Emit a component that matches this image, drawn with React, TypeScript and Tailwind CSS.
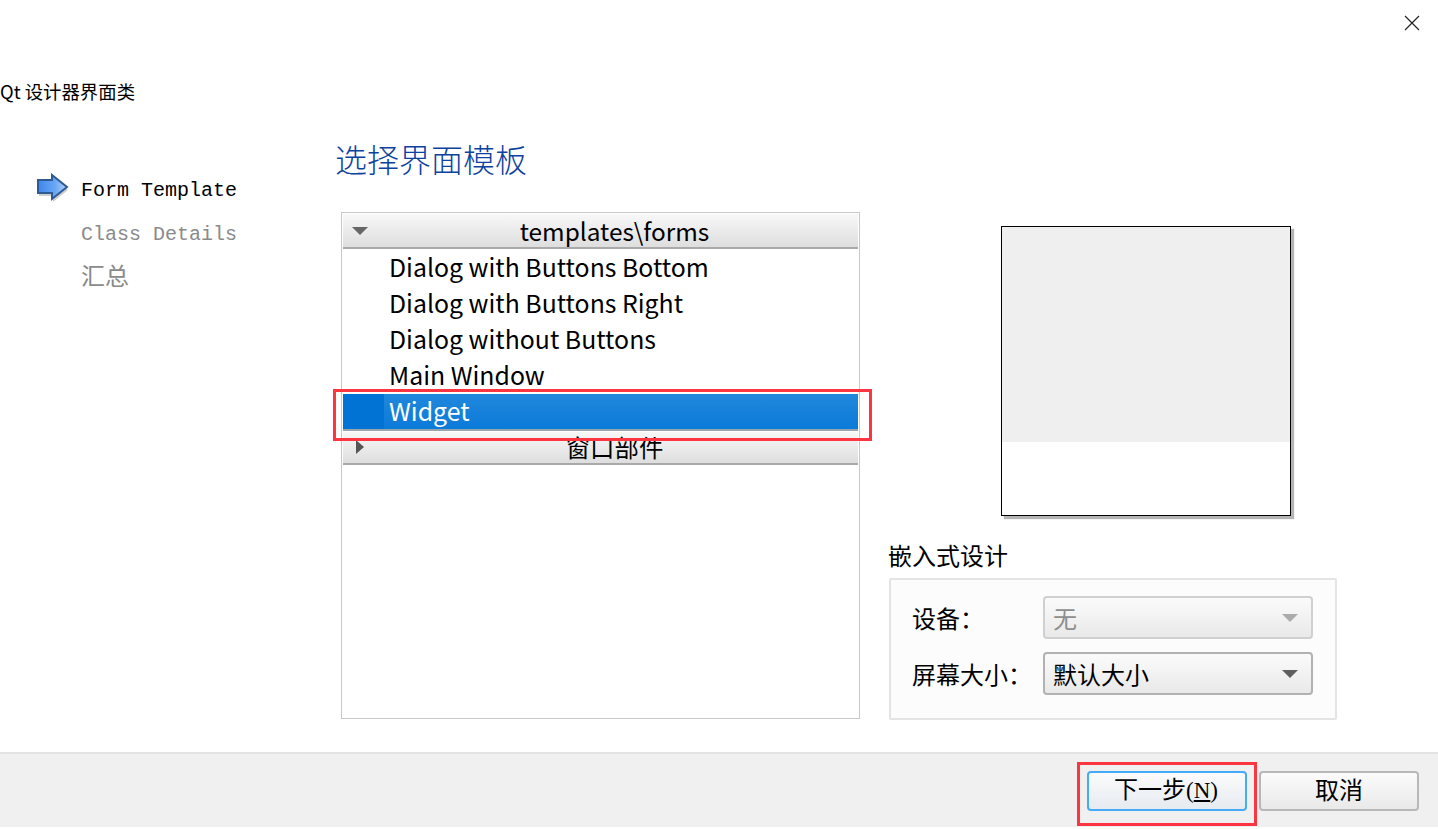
const sans = "font-['Noto_Sans_CJK_SC','Noto_Sans',sans-serif]";

function Arrow() {
  return (
    <svg width="34" height="32" viewBox="0 0 34 32" className="shrink-0 mb-[4px]">
      <defs>
        <linearGradient id="g" x1="0" x2="1" y1="0" y2="0">
          <stop offset="0" stopColor="#3d85ea" />
          <stop offset="0.6" stopColor="#6aa8f5" />
          <stop offset="1" stopColor="#b4d3f8" />
        </linearGradient>
      </defs>
      <path d="M2 7h14V2l15 12-15 12v-6H2z" fill="#cfcfcf" transform="translate(1 3)" />
      <path d="M2 7h14V2l15 12-15 12v-6H2z" fill="url(#g)" stroke="#2f5a92" strokeWidth="2" />
    </svg>
  );
}

function Section({ open, label }: { open: boolean; label: string }) {
  return (
    <div
      className={
        "relative flex items-center justify-center pl-[28px] bg-gradient-to-b from-[#f8f8f8] to-[#dedede] border-b-2 border-[#a9a9a9] text-[24.4px] leading-none text-black " +
        (open ? "h-[35px] pt-[2px]" : "h-[33px]")
      }
    >
      {open ? (
        <span className="absolute left-[9px] top-[13px] w-0 h-0 border-l-[8px] border-r-[8px] border-t-[8px] border-l-transparent border-r-transparent border-t-[#666666]" />
      ) : (
        <span className="absolute left-[13px] top-[8px] w-0 h-0 border-t-[7px] border-b-[7px] border-l-[8px] border-t-transparent border-b-transparent border-l-[#555555]" />
      )}
      <span>{label}</span>
    </div>
  );
}

function Combo({ label, value, disabled }: { label: string; value: string; disabled?: boolean }) {
  return (
    <div className="flex items-center h-[43px]">
      <span className="w-[131px] text-[24px] text-black">{label}</span>
      <div
        className={
          "w-[270px] h-[43px] rounded-[4px] border-2 bg-gradient-to-b from-[#fbfbfb] to-[#e9e9e9] flex items-center justify-between pl-[8px] pr-[13px] text-[24px] " +
          (disabled ? "border-[#d0d0d0] text-[#8e8e8e]" : "border-[#b2b2b2] text-black")
        }
      >
        <span>{value}</span>
        <span
          className={
            "w-0 h-0 border-l-[8px] border-r-[8px] border-t-[8px] border-l-transparent border-r-transparent " +
            (disabled ? "border-t-[#ababab]" : "border-t-[#5f5f5f]")
          }
        />
      </div>
    </div>
  );
}

export default function App() {
  const items = ["Dialog with Buttons Bottom", "Dialog with Buttons Right", "Dialog without Buttons", "Main Window"];
  return (
    <div className={"relative w-[1438px] h-[829px] bg-white flex flex-col overflow-hidden " + sans}>
      <div className="h-[752px] flex flex-col">
        <div className="h-[46px] flex justify-end items-center pr-[18px]">
          <svg width="16" height="16" viewBox="0 0 16 16">
            <path d="M1 1l14 14M15 1L1 15" stroke="#222" strokeWidth="1.2" fill="none" />
          </svg>
        </div>
        <div className="h-[92px] flex items-center text-[18.4px] text-black">Qt 设计器界面类</div>
        <div className="flex-1 flex">
          <div className="w-[336px] pl-[36px] pt-[31px] font-['Liberation_Mono','Noto_Sans_CJK_SC',monospace] text-[20px] leading-[44px]">
            <div className="flex items-center gap-[11px] text-black">
              <Arrow />
              <span>Form Template</span>
            </div>
            <div className="pl-[45px] text-[#8a8a8a]">Class Details</div>
            <div className="pl-[45px] text-[#8a8a8a] text-[24px]">汇总</div>
          </div>
          <div className="flex-1 flex flex-col">
            <div className="h-[28px] -ml-px text-[32px] leading-[40px] font-light text-[#0d42a0]">选择界面模板</div>
            <div className="flex mt-[46px]">
              <div className="ml-[5px] w-[519px] h-[507px] border border-[#c8c8c8] p-[1px] bg-white flex flex-col">
                <Section open label="templates\forms" />
                <div className="text-[24.85px] text-black">
                  {items.map((t) => (
                    <div key={t} className="h-[36px] pl-[46px] flex items-center">{t}</div>
                  ))}
                  <div className="mt-px h-[37px] flex bg-[#0a7ad9] text-white border-b-2 border-[#9aa4ad]">
                    <div className="w-[41px] bg-[#0073d4]" />
                    <div className="flex-1 pl-[5px] pb-[2px] flex items-center bg-gradient-to-b from-[#2088dc] to-[#0a7ad9]">Widget</div>
                  </div>
                </div>
                <div className="mt-px"><Section open={false} label="窗口部件" /></div>
              </div>
              <div className="ml-[29px] w-[448px] flex flex-col">
                <div className="ml-[112px] mt-[14px] w-[290px] h-[290px] border-[1.5px] border-black bg-white shadow-[3px_3px_1px_#b5b5b5] shrink-0">
                  <div className="h-[215px] bg-[#efefef]" />
                </div>
                <div className="mt-[24px] -ml-px text-[24px] leading-[30px] text-black">嵌入式设计</div>
                <div className="mt-[8px] h-[142px] border-2 border-[#e4e4e4] rounded-[2px] bg-[#fcfcfc] pl-[21px] pt-[16px] flex flex-col gap-[13px]">
                  <Combo label="设备：" value="无" disabled />
                  <Combo label="屏幕大小：" value="默认大小" />
                </div>
              </div>
            </div>
          </div>
        </div>
      </div>
      <div className="h-[75px] bg-[#f0f0f0] border-t-2 border-[#e3e3e3] flex items-center justify-end gap-[12px] pr-[19px]">
        <button className="w-[160px] h-[40px] rounded-[4px] border-2 border-[#45aaf8] bg-gradient-to-b from-[#fbfbfb] to-[#e6ebf1] text-[24px] text-black leading-none pb-[4px] pr-[2px]">
          下一步<span className="font-['Liberation_Serif',serif] text-[23px]">(<span className="underline">N</span>)</span>
        </button>
        <button className="w-[160px] h-[40px] rounded-[4px] border-2 border-[#b8b8b8] bg-gradient-to-b from-[#fbfbfb] to-[#e9e9e9] text-[24px] text-black leading-none pb-[4px]">
          取消
        </button>
      </div>
      <div className="absolute left-[333px] top-[389px] w-[539px] h-[52px] border-[3px] border-[#fb3640]" />
      <div className="absolute left-[1077px] top-[762px] w-[180px] h-[64px] border-[3px] border-[#fb3640]" />
    </div>
  );
}
